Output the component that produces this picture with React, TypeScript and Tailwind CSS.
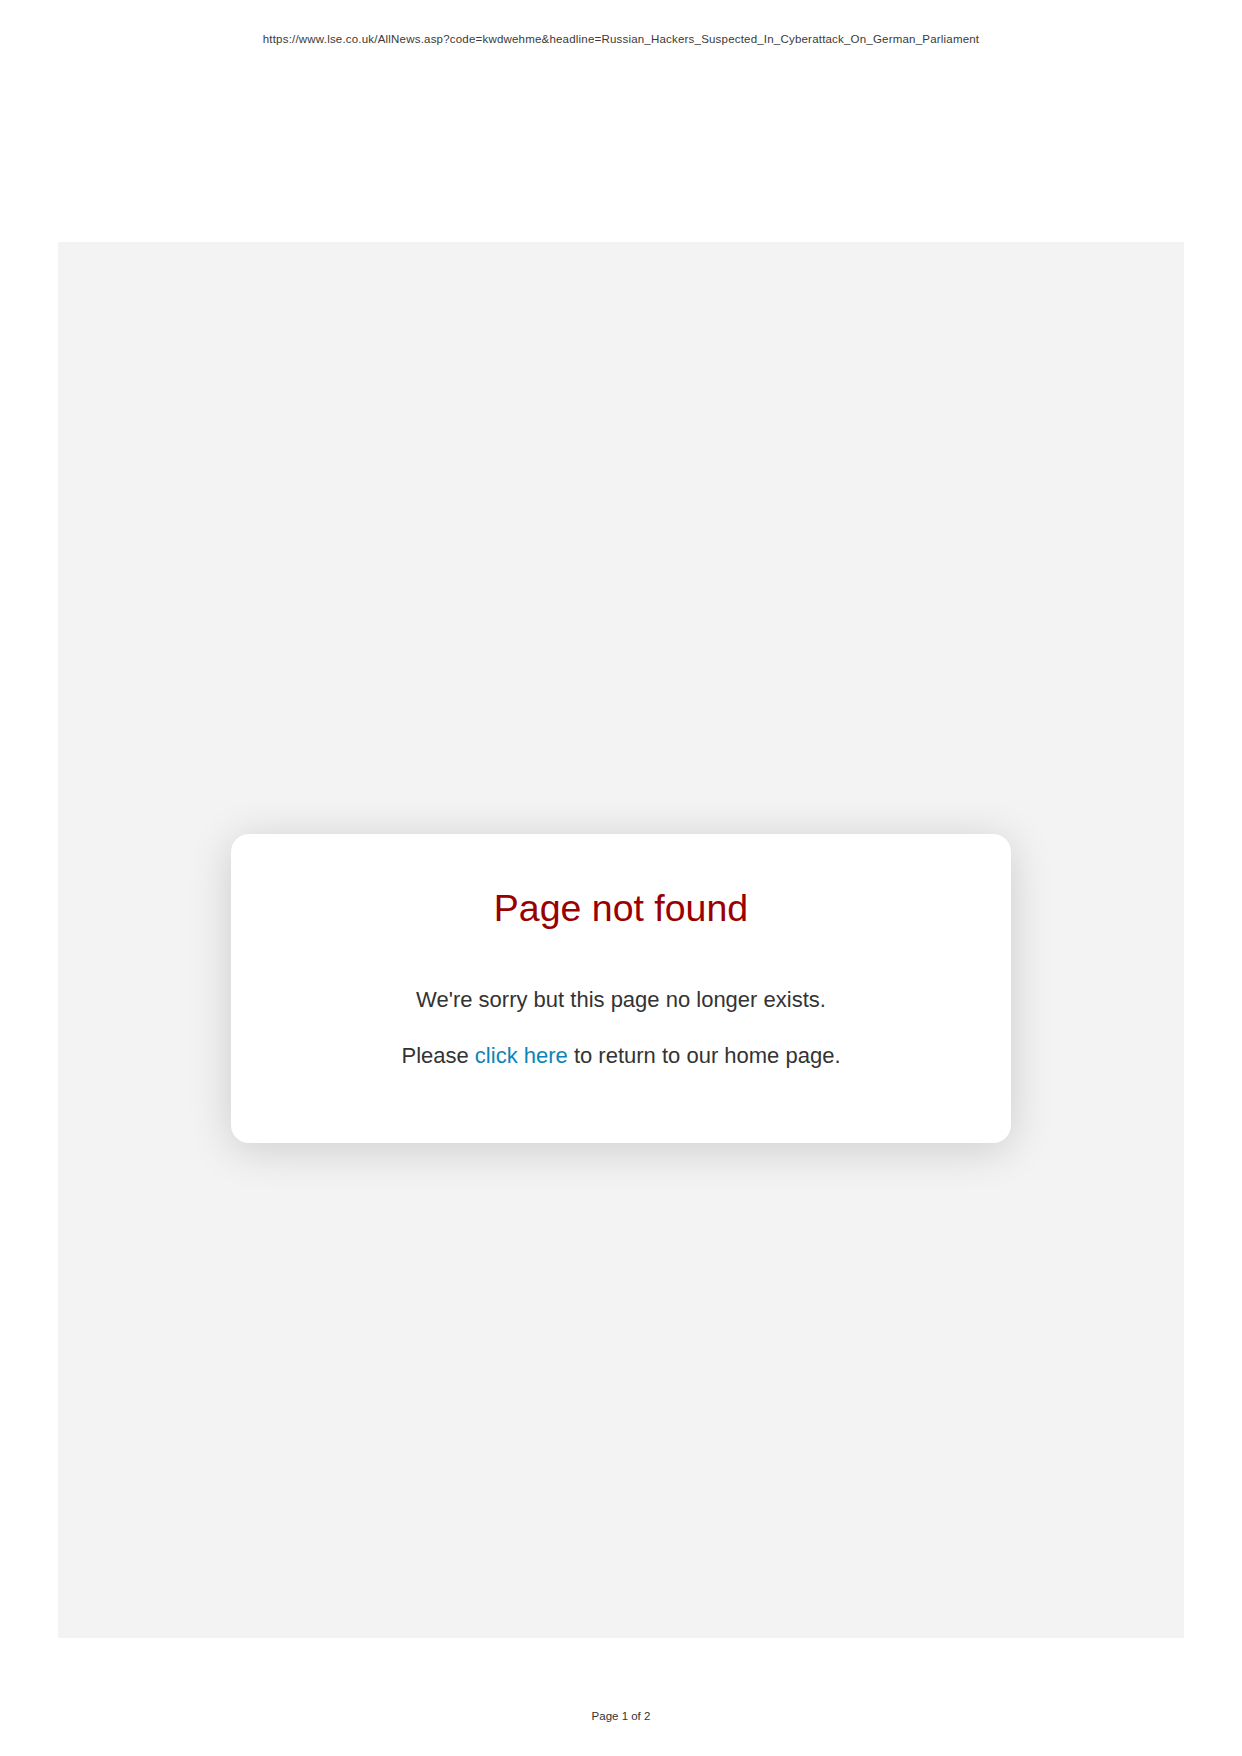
const PageNotFound = () => {
  return (
    <div className="min-h-[1756px] w-[1242px] bg-white font-['Liberation_Sans',Arial,sans-serif]">
      <div className="flex h-[80px] items-center justify-center">
        <p className="text-[11.5px] tracking-[0.2px] text-[#3a3a3a]">
          https://www.lse.co.uk/AllNews.asp?code=kwdwehme&amp;headline=Russian_Hackers_Suspected_In_Cyberattack_On_German_Parliament
        </p>
      </div>

      <div className="mx-[58px] mt-[162px] flex h-[1396px] flex-col items-center bg-[#f3f3f3] pt-[592px]">
        <div className="w-[780px] rounded-[18px] bg-white px-10 pt-[53px] pb-[74px] text-center shadow-[0_6px_44px_rgba(0,0,0,0.16)]">
          <h1 className="text-[37.5px] leading-[42px] text-[#990000]">Page not found</h1>
          <p className="mt-[58px] text-[22px] leading-[26px] text-[#333]">
            We're sorry but this page no longer exists.
          </p>
          <p className="mt-[30px] text-[22px] leading-[26px] text-[#333]">
            Please{' '}
            <a href="/" className="text-[#0a85b8]">
              click here
            </a>{' '}
            to return to our home page.
          </p>
        </div>
      </div>

      <div className="mt-[70px] text-center text-[11.5px] text-[#333]">Page 1 of 2</div>
    </div>
  )
}

export default PageNotFound
